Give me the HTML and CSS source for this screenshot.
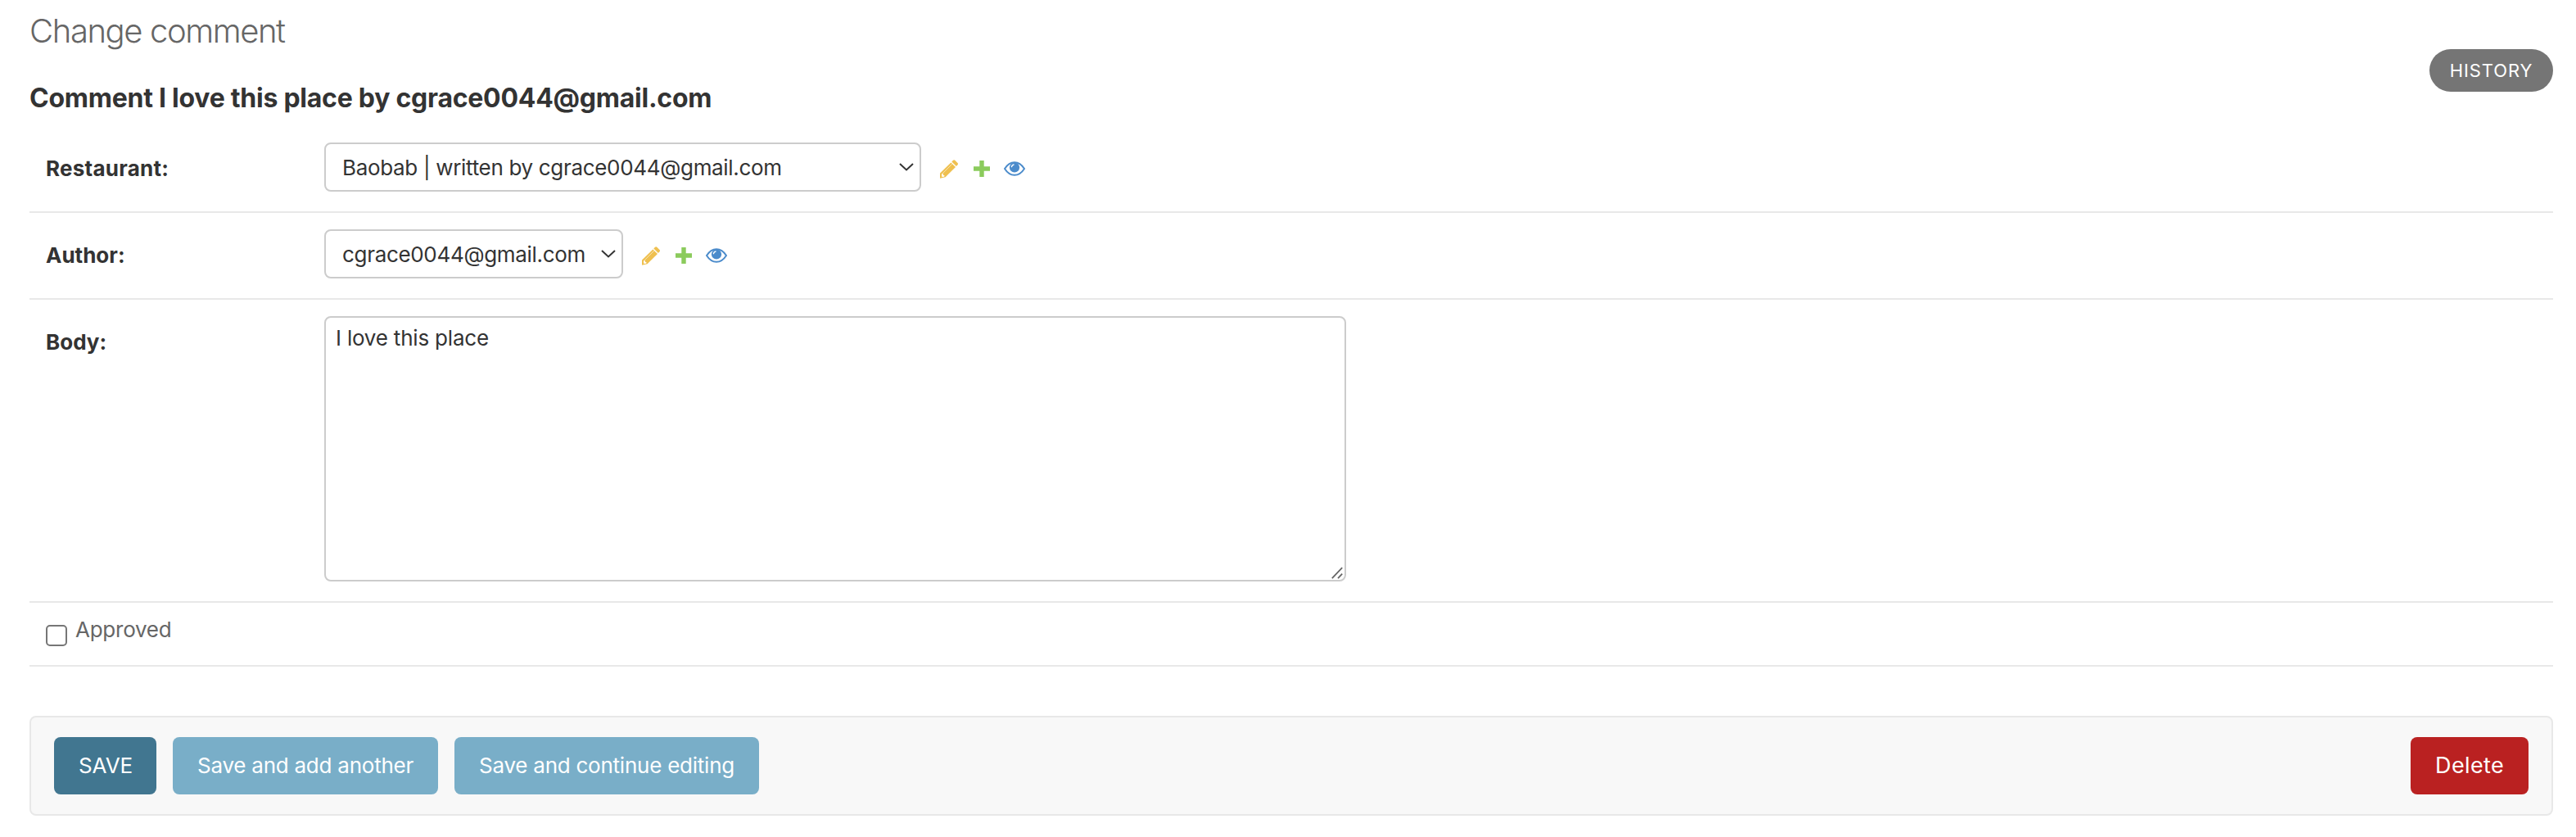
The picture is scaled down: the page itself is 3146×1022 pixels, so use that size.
FILE: index.html
```html
<!DOCTYPE html>
<html lang="en">
<head>
<meta charset="utf-8">
<title>Change comment</title>
<link rel="stylesheet" href="styles.css">
</head>
<body>
<svg width="0" height="0" class="defs" aria-hidden="true">
  <symbol id="pencil" viewBox="0 0 22 23">
    <path d="M14.300 2.500 16 .8q1.200-1 2.300 0l3.200 3.300q1 1.100 0 2.200L19.900 8z"/>
    <path d="M13.400 3.400 19 9 6.600 21.200 0 22.700V16.600z"/>
    <path class="shine" d="M3 16.900 14.800 5.200"/>
    <path class="tip" d="M1.900 17.500 3.500 17 4 18.800 5.700 19.400 5 20.700 2.300 21z"/>
  </symbol>
  <symbol id="plus" viewBox="0 0 20 20"><path d="M7.300 0h5.400v7.300H20v5.400h-7.300V20H7.300v-7.300H0V7.300h7.300z"/></symbol>
  <symbol id="eye" viewBox="0 0 26 18">
    <path class="lid" d="M1 9Q6 1.200 13 1.200T25 9Q20 16.800 13 16.800T1 9z"/>
    <circle cx="13" cy="7.500" r="6.100"/>
    <path class="glint" d="M9.300 7.300Q9.600 4.300 12.500 3.800"/>
  </symbol>
</svg>
<main class="content">
  <h1 class="title">Change comment</h1>
  <div class="heading">
    <h2 class="subtitle">Comment I love this place by cgrace0044@gmail.com</h2>
    <a class="history">HISTORY</a>
  </div>
  <form>
    <div class="row">
      <label class="label restaurant">Restaurant:</label>
      <div class="select wide"><span>Baobab | written by cgrace0044@gmail.com</span>
        <svg class="chevron" viewBox="0 0 18 10"><path d="M1 1l8 7.500L17 1"/></svg></div>
      <div class="tools"><svg class="pencil"><use href="#pencil"/></svg><svg class="plus"><use href="#plus"/></svg><svg class="eye"><use href="#eye"/></svg></div>
    </div>
    <div class="row">
      <label class="label">Author:</label>
      <div class="select"><span>cgrace0044@gmail.com</span>
        <svg class="chevron" viewBox="0 0 18 10"><path d="M1 1l8 7.500L17 1"/></svg></div>
      <div class="tools"><svg class="pencil"><use href="#pencil"/></svg><svg class="plus"><use href="#plus"/></svg><svg class="eye"><use href="#eye"/></svg></div>
    </div>
    <div class="row">
      <label class="label">Body:</label>
      <div class="textarea">I love this place
        <svg class="grip" viewBox="0 0 14 15"><path d="M.8 14.200 13.200 1.200M8 14.200l5.200-5.600"/></svg></div>
    </div>
    <div class="row check">
      <span class="box"></span><label class="approved">Approved</label>
    </div>
    <div class="submit">
      <a class="btn save">SAVE</a>
      <a class="btn">Save and add another</a>
      <a class="btn">Save and continue editing</a>
      <a class="btn delete">Delete</a>
    </div>
  </form>
</main>
</body>
</html>
```
FILE: styles.css
```css
* { box-sizing: border-box; }
body {
  margin: 0;
  background: #fff;
  color: #333;
  font: 26px/36px Inter, "Liberation Sans", sans-serif;
}
.defs { position: absolute; }
.content { padding: 0 28px 0 36px; }
.title { margin: 0; padding-top: 14px; font-size: 40px; line-height: 48px; font-weight: 300; letter-spacing: -1.400px; color: #666; }
.heading { display: flex; justify-content: space-between; height: 92px; }
.subtitle { margin: 38px 0 0; font-size: 32px; line-height: 40px; font-weight: 700; letter-spacing: -.25px; }
.history {
  display: flex; align-items: center; justify-content: center;
  width: 151px; height: 52px; margin-top: -2px;
  border-radius: 26px; background: #757575; color: #fff;
  font-size: 22px; letter-spacing: .9px;
}
.row { display: flex; align-items: flex-start; padding: 20px 0 24px 20px; border-bottom: 2px solid #e8e8e8; }
.label { width: 340px; padding-top: 14px; font-weight: 700; }
.restaurant { letter-spacing: .25px; }
.select {
  display: flex; align-items: center; justify-content: space-between;
  width: 365px; height: 60px; padding: 0 7px 0 20px;
  border: 2px solid #ccc; border-radius: 8px;
  letter-spacing: -.320px;
}
.select span { padding-top: 1px; }
.select.wide { width: 729px; }
.chevron { width: 18px; height: 10px; fill: none; stroke: #333; stroke-width: 2; }
.tools { display: flex; align-items: center; height: 60px; padding: 4px 0 0 23px; }
.pencil { width: 22px; height: 23px; fill: #efc050; margin-right: 19px; }
.plus { width: 20px; height: 20px; fill: #8bcb5c; margin-right: 17px; }
.eye { width: 26px; height: 18px; fill: #4b8bcb; }
.lid { fill: none; stroke: #4b8bcb; stroke-width: 2; }
.glint, .shine { fill: none; stroke: #fff; stroke-width: 1.300; }
.shine { stroke: #f9e4b0; stroke-width: 1; }
.tip { fill: #fff; }
.textarea { position: relative; width: 1248px; height: 324px; padding: 7px 12px; border: 2px solid #ccc; border-radius: 8px; letter-spacing: -.2px; }
.grip { position: absolute; right: 2px; bottom: 1px; width: 14px; height: 15px; stroke: #666; stroke-width: 1.800; fill: none; }
.row.check { height: 78px; padding: 15px 0 0 20px; }
.box { width: 26px; height: 26px; margin: 12px 10px 0 0; border: 2px solid #767676; border-radius: 5px; }
.approved { color: #666; letter-spacing: -.250px; }
.submit {
  display: flex; align-items: center; gap: 20px;
  height: 122px; margin-top: 60px; padding: 0 28px;
  border: 2px solid #e8e8e8; border-radius: 8px; background: #f8f8f8;
}
.btn { display: flex; align-items: center; height: 70px; padding: 0 30px; border-radius: 8px; background: #79aec8; color: #fff; letter-spacing: -.240px; }
.btn.save { width: 125px; background: #417690; letter-spacing: -.1px; }
.btn.delete { margin-left: auto; background: #ba2121; font-size: 27px; letter-spacing: .350px; }
```
